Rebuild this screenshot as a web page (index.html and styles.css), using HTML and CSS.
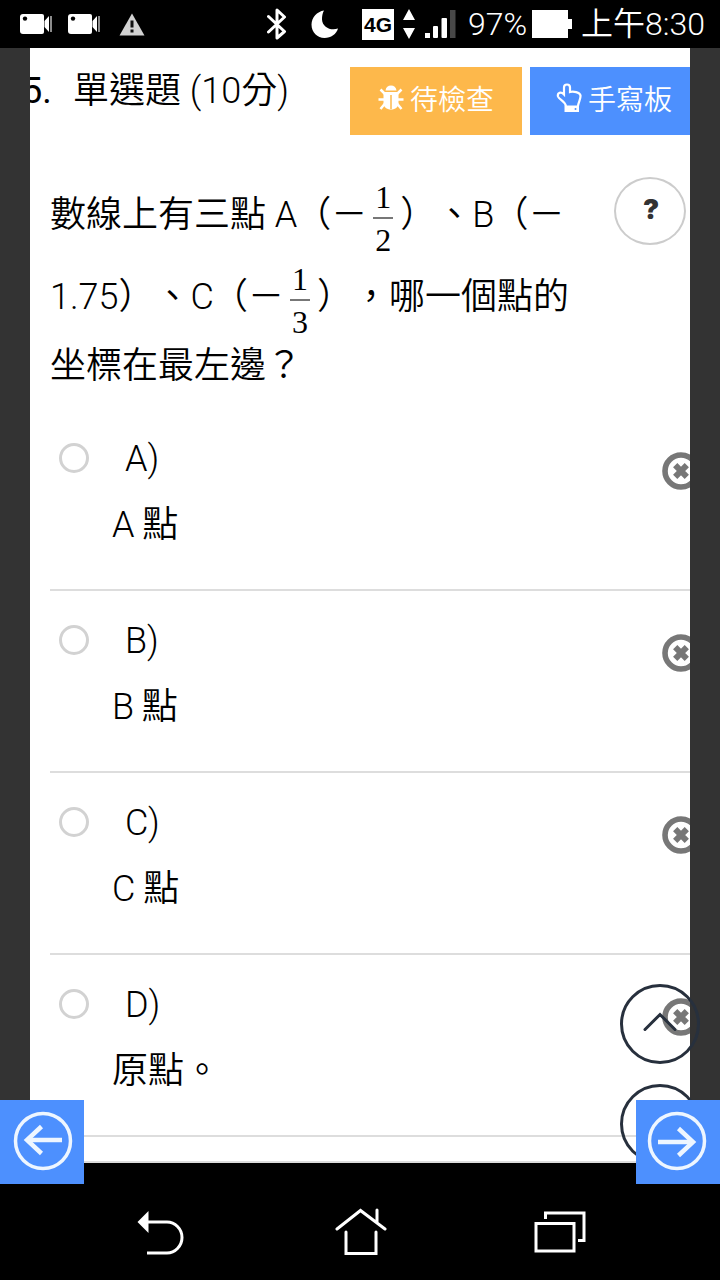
FILE: index.html
```
<!DOCTYPE html>
<html lang="zh-Hant">
<head>
  <meta charset="UTF-8" />
  <meta name="viewport" content="width=device-width, initial-scale=1.0"/>
  <title>單選題</title>
  <link rel="stylesheet" href="styles.css">
</head>
<body>
  <svg class="defs" width="0" height="0">
    <symbol id="camera" viewBox="0 0 34 22">
      <path d="M3 1h19a2 2 0 0 1 2 2v16a2 2 0 0 1-2 2H3a3 3 0 0 1-3-3V4a3 3 0 0 1 3-3z" fill="#fff"/>
      <circle cx="5" cy="5.600" r="2.200" fill="#000"/>
      <path d="M24.500 8l4.500-5v16l-4.500-5z" fill="#fff"/>
      <path d="M31 3v16" stroke="#bbb" stroke-width="1.500"/>
    </symbol>
    <symbol id="remove" viewBox="0 0 38 38">
      <circle cx="19" cy="19" r="16" fill="none" stroke="#777" stroke-width="5.600"/>
      <path d="M13.200 13.200l11.600 11.600M24.800 13.200L13.200 24.800" stroke="#777" stroke-width="6"/>
    </symbol>
  </svg>

  <div class="status-bar">
    <svg class="cam" width="34" height="22"><use href="#camera"/></svg>
    <svg class="cam second" width="34" height="22"><use href="#camera"/></svg>
    <svg class="warn" width="26" height="23" viewBox="0 0 26 23">
      <path d="M13 .5L25.500 22.500H.5z" fill="#d2d2d2"/>
      <path d="M13 7.500v7M13 16.500v3" stroke="#111" stroke-width="3"/>
    </svg>
    <svg class="bluetooth" width="20" height="32" viewBox="0 0 20 32">
      <path d="M1.500 8.500L17.500 23.500 10 30V2l7.500 7L1.500 24" fill="none" stroke="#fff" stroke-width="3" stroke-linejoin="round" stroke-linecap="round"/>
    </svg>
    <svg class="moon" width="28" height="29" viewBox="0 0 28 29">
      <path d="M13 .5C6 1.500.5 7.500.5 14.500c0 8 6 13.500 13 13.500 6.500 0 12-4 13.500-9.500-7 2.500-15.500-1-16-9C11 6 11.500 3 13 .5z" fill="#fff"/>
    </svg>
    <span class="network">4G</span>
    <svg class="updown" width="14" height="32" viewBox="0 0 14 32">
      <path d="M7 1l6 11H1zM7 31L1 20h12z" fill="#fff"/>
    </svg>
    <svg class="signal" width="32" height="30" viewBox="0 0 32 30">
      <rect x="1" y="24" width="5" height="5" fill="#fff"/>
      <rect x="9" y="17" width="5" height="12" rx="1" fill="#fff"/>
      <rect x="17.500" y="9" width="5.500" height="20" rx="1" fill="#fff"/>
      <rect x="26" y="1" width="5.500" height="28" fill="#484848"/>
    </svg>
    <span class="percent">97%</span>
    <span class="battery"></span>
    <span class="clock">上午8:30</span>
  </div>

  <div class="stage">
    <div class="quiz">
      <div class="quiz-head">
        <div class="quiz-title"><b class="number">5.</b>單選題 (10分)</div>
        <div class="head-buttons">
          <button class="check-btn">
            <svg width="26" height="26" viewBox="0 0 26 26">
              <path d="M7.500 5.500C8 2 10 .5 13 .5s5 1.500 5.500 5z" fill="#fff"/>
              <path d="M5.500 7h15v11c0 4-3 6.500-7.500 6.500S5.500 22 5.500 18z" fill="#fff"/>
              <path d="M7 9L2.500 4.500M19 9l4.500-4.500M6.500 14.500H.5M19.500 14.500h6M7 18.500L2.500 24M19 18.500l4.500 5.500" stroke="#fff" stroke-width="2.500"/>
              <path d="M13 10v14" stroke="#fdb84b" stroke-width="1.500"/>
            </svg>
            <span>待檢查</span>
          </button>
          <button class="board-btn">
            <svg width="26" height="30" viewBox="0 0 26 30">
              <path d="M10 23C9 18 3 16.500 2 13.500 1 9.500 5 8.500 8 11.500V4.500c0-4 6-4 6 0V9c3-1 10 0 10.500 3.500.3 4-2 6-2.500 10.500" fill="none" stroke="#fff" stroke-width="2.200"/>
              <path d="M8.500 22.500H23V29H8.500z" fill="#fff"/>
              <circle cx="19.500" cy="26" r="1" fill="#4d90fe"/>
            </svg>
            <span>手寫板</span>
          </button>
        </div>
      </div>

      <div class="question">
        <div class="question-text">
          <div class="line tall">數線上有三點 A<span class="open">（</span>－<span class="frac"><i>1</i><i>2</i></span>）、B<span class="open">（</span>－</div>
          <div class="line tall">1.75）、C<span class="open">（</span>－<span class="frac"><i>1</i><i>3</i></span>），哪一個點的</div>
          <div class="line">坐標在最左邊？</div>
        </div>
        <button class="help-btn">?</button>
      </div>

      <div class="options">
        <div class="option">
          <span class="radio"></span>
          <div class="answer"><div class="letter">A)</div><div class="content">A 點</div></div>
          <svg class="remove" width="38" height="38"><use href="#remove"/></svg>
        </div>
        <div class="option">
          <span class="radio"></span>
          <div class="answer"><div class="letter">B)</div><div class="content">B 點</div></div>
          <svg class="remove" width="38" height="38"><use href="#remove"/></svg>
        </div>
        <div class="option">
          <span class="radio"></span>
          <div class="answer"><div class="letter">C)</div><div class="content">C 點</div></div>
          <svg class="remove" width="38" height="38"><use href="#remove"/></svg>
        </div>
        <div class="option">
          <span class="radio"></span>
          <div class="answer"><div class="letter">D)</div><div class="content">原點。</div></div>
          <svg class="remove" width="38" height="38"><use href="#remove"/></svg>
        </div>
      </div>
    </div>

    <div class="scroll-buttons">
      <svg width="80" height="80" viewBox="0 0 80 80" fill="none" stroke="#27303d">
        <circle cx="40" cy="40" r="38.500" stroke-width="3"/>
        <path d="M25 45.500L40 30.500l15 15" stroke-width="3" stroke-linecap="round"/>
      </svg>
      <svg width="80" height="80" viewBox="0 0 80 80" fill="none" stroke="#27303d">
        <circle cx="40" cy="40" r="38.500" stroke-width="3"/>
      </svg>
    </div>
  </div>

  <div class="pager">
    <button>
      <svg width="84" height="84" viewBox="0 0 84 84" fill="none" stroke="#eef6ff">
        <circle cx="43" cy="41" r="27.500" stroke-width="3.500"/>
        <path d="M62 40H28" stroke-width="4.500"/>
        <path d="M41.500 26.500L27 40l14.500 13.500" stroke-width="4.500"/>
      </svg>
    </button>
    <button>
      <svg width="84" height="84" viewBox="0 0 84 84" fill="none" stroke="#eef6ff">
        <circle cx="41" cy="41" r="27.500" stroke-width="3.500"/>
        <path d="M22 42h35" stroke-width="4.500"/>
        <path d="M42.500 28.500L57 42 42.500 55.500" stroke-width="4.500"/>
      </svg>
    </button>
  </div>

  <div class="nav-bar">
    <svg class="back" width="48" height="46" viewBox="0 0 48 46">
      <path d="M.5 12L11.500 1v22z" fill="#fff"/>
      <path d="M10 12h20c8 0 15 7 15 15.500S38 43 30 43H10" fill="none" stroke="#fff" stroke-width="3"/>
    </svg>
    <svg class="home" width="52" height="48" viewBox="0 0 52 48" fill="none" stroke="#fff" stroke-width="3" stroke-linecap="round">
      <path d="M2 21L25.500 2.500 50 21M42 2v12M11 24v21.500h30V24"/>
    </svg>
    <svg class="recent" width="52" height="42" viewBox="0 0 52 42" fill="none" stroke="#fff" stroke-width="3">
      <rect x="2" y="12.500" width="38" height="27.500"/>
      <path d="M11.500 8V2H50v27.500h-6"/>
    </svg>
  </div>
</body>
</html>
```
FILE: styles.css
```
* {
  box-sizing: border-box;
}

body {
  position: relative;
  display: flex;
  flex-direction: column;
  width: 720px;
  height: 1280px;
  margin: 0;
  overflow: hidden;
  background: #000;
  color: #000;
  font-family: Roboto, "Noto Sans CJK TC", sans-serif;
  font-size: 36px;
  font-weight: 350;
  text-spacing-trim: space-all;
}

button {
  border: none;
  padding: 0;
  font: inherit;
}

svg {
  display: block;
  flex: none;
}

.defs {
  position: absolute;
}

/* status bar */
.status-bar {
  display: flex;
  align-items: center;
  height: 48px;
  flex: none;
  padding-left: 20px;
  color: #fff;
  font-size: 32px;
  line-height: 48px;
  white-space: nowrap;
}

.cam.second {
  margin-left: 14px;
}

.warn {
  margin-left: 17px;
}

.bluetooth {
  margin-left: 122px;
}

.moon {
  margin-left: 24px;
}

.network {
  width: 32px;
  height: 31px;
  margin-left: 23px;
  background: #fff;
  color: #000;
  font: bold 21px/31px "Liberation Sans", sans-serif;
  text-align: center;
}

.updown {
  margin-left: 8px;
}

.signal {
  margin-left: 8px;
}

.percent {
  width: 64px;
  margin-left: 12px;
}

.battery {
  position: relative;
  width: 36px;
  height: 28px;
  background: #fff;
}

.battery::after {
  content: "";
  position: absolute;
  left: 36px;
  top: 9px;
  width: 4px;
  height: 10px;
  background: #fff;
}

.clock {
  margin-left: 13px;
}

/* quiz page */
.stage {
  position: relative;
  height: 1115px;
  flex: none;
  padding: 0 30px;
  background: #333;
}

.quiz {
  height: 1115px;
  padding-left: 20px;
  overflow: hidden;
  background: #fff;
  border-bottom: 2px solid #ddd;
}

.quiz-head {
  display: flex;
  justify-content: space-between;
  height: 129px;
  padding-top: 19px;
}

.quiz-title {
  margin-left: -28px;
  line-height: 48px;
  white-space: nowrap;
}

.quiz-title .number {
  display: inline-block;
  width: 51px;
  font-weight: 400;
}

.head-buttons {
  display: flex;
  gap: 8px;
}

.head-buttons button {
  display: flex;
  align-items: center;
  height: 68px;
  padding-bottom: 6px;
  gap: 6px;
  color: #fff;
  font-size: 28px;
  white-space: nowrap;
}

.head-buttons .check-btn {
  width: 172px;
  padding-left: 28px;
  background: #fdb84b;
}

.head-buttons .board-btn {
  width: 160px;
  padding-left: 26px;
  background: #4d90fe;
}

.question {
  display: flex;
  justify-content: space-between;
  height: 232px;
}

.question-text {
  white-space: nowrap;
}

.line {
  height: 52px;
  line-height: 50px;
}

.line.tall {
  display: flex;
  height: 82px;
  line-height: 76px;
  white-space: pre;
}

.open {
  margin-left: -2px;
}

.frac {
  display: flex;
  flex-direction: column;
  align-items: center;
  width: 20px;
  margin: 0 7px 0 6px;
  font: 32px/40px "Liberation Serif", serif;
}

.frac i {
  width: 20px;
  height: 43px;
  font-style: normal;
  text-align: center;
}

.frac i + i {
  border-top: 2px solid #777;
  line-height: 43px;
}

.help-btn {
  width: 72px;
  height: 68px;
  margin-right: 4px;
  padding: 0 0 4px 2px;
  border: 2px solid #ccc;
  border-radius: 50%;
  background: #fff;
  color: #333;
  font: 900 27px Inter, sans-serif;
}

.option {
  display: flex;
  height: 182px;
  padding: 18px 0 0 9px;
  border-bottom: 2px solid #ddd;
}

.radio {
  width: 30px;
  height: 30px;
  margin-top: 16px;
  border: 3px solid #d2d2d2;
  border-radius: 50%;
}

.answer {
  flex: 1;
  margin-left: 23px;
  line-height: 65px;
}

.letter {
  padding-left: 13px;
}

.content {
  line-height: 67px;
  word-spacing: -1px;
}

.remove {
  margin: 25px -10px 0 0;
}

.scroll-buttons {
  position: absolute;
  left: 620px;
  top: 936px;
  display: flex;
  flex-direction: column;
  gap: 20px;
}

.pager {
  position: absolute;
  left: 0;
  top: 1100px;
  display: flex;
  justify-content: space-between;
  width: 720px;
}

.pager button {
  background: #4d90fe;
}

.nav-bar {
  position: relative;
  z-index: -1;
  display: flex;
  align-items: flex-start;
  flex: 1;
  padding: 45px 0 0 137px;
  background: #000;
}

.back {
  margin-top: 2px;
}

.home {
  margin-left: 150px;
}

.recent {
  margin: 3px 0 0 147px;
}
```
